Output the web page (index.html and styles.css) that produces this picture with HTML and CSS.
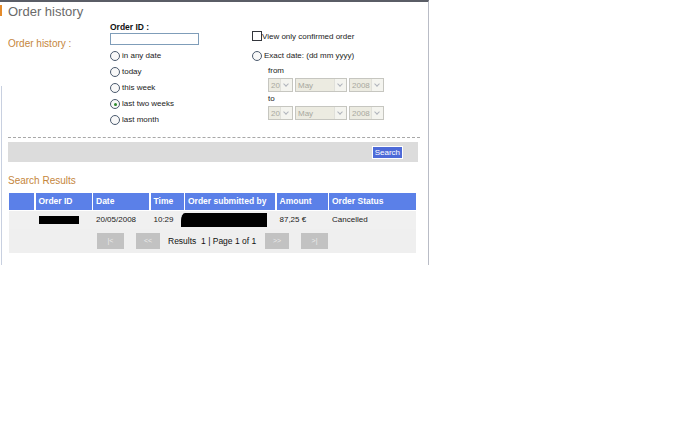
FILE: index.html
```html
<!DOCTYPE html>
<html lang="en">
<head>
  <meta charset="UTF-8">
  <title>Order history</title>
  <link rel="stylesheet" href="styles.css">
</head>
<body>

  <div class="page">
    <h1 class="title">Order history</h1>

    <div class="filters">
      <div class="label">Order history :</div>

      <div class="col-id">
        <div class="field-name">Order ID :</div>
        <div class="text-input"></div>
        <div class="radio-row"><span class="radio"></span>in any date</div>
        <div class="radio-row"><span class="radio"></span>today</div>
        <div class="radio-row"><span class="radio"></span>this week</div>
        <div class="radio-row"><span class="radio checked"></span>last two weeks</div>
        <div class="radio-row"><span class="radio"></span>last month</div>
      </div>

      <div class="col-date">
        <div class="check-row"><span class="checkbox"></span>View only confirmed order</div>
        <div class="radio-row"><span class="radio"></span>Exact date: (dd mm yyyy)</div>
        <div class="date-block">
          <div class="date-label">from</div>
          <div class="selects">
            <span class="select day">20<i class="arrow"></i></span>
            <span class="select month">May<i class="arrow"></i></span>
            <span class="select year">2008<i class="arrow"></i></span>
          </div>
          <div class="date-label">to</div>
          <div class="selects">
            <span class="select day">20<i class="arrow"></i></span>
            <span class="select month">May<i class="arrow"></i></span>
            <span class="select year">2008<i class="arrow"></i></span>
          </div>
        </div>
      </div>
    </div>

    <div class="divider"></div>

    <div class="search-bar">
      <span class="search-btn">Search</span>
    </div>

    <h2 class="results-title">Search Results</h2>

    <div class="results">
      <div class="grid head">
        <div></div>
        <div>Order ID</div>
        <div>Date</div>
        <div>Time</div>
        <div>Order submitted by</div>
        <div>Amount</div>
        <div>Order Status</div>
      </div>
      <div class="grid row">
        <div></div>
        <div><span class="hidden-id"></span></div>
        <div>20/05/2008</div>
        <div>10:29</div>
        <div><span class="hidden-name"></span></div>
        <div>87,25 &euro;</div>
        <div>Cancelled</div>
      </div>
      <div class="pager">
        <span class="pg-btn">|&lt;</span>
        <span class="pg-btn">&lt;&lt;</span>
        <span class="pg-info">Results&nbsp; 1 | Page 1 of 1</span>
        <span class="pg-btn">&gt;&gt;</span>
        <span class="pg-btn">&gt;|</span>
      </div>
    </div>
  </div>

</body>
</html>
```

FILE: styles.css
```css
body {
  margin: 0;
  background-color: white;
  font-family: "Liberation Sans", Arial, sans-serif;
  font-size: 8px;
  color: #222;
}

.page {
  position: relative;
  width: 420px;
  height: 263px;
  padding-left: 8px;
  border-top: 2px solid #5a5d66;
  border-right: 1px solid #b9bcc6;
}

.page::before {
  content: "";
  position: absolute;
  left: 0;
  top: 3px;
  width: 2px;
  height: 11px;
  background-color: #e48a2a;
}

.page::after {
  content: "";
  position: absolute;
  left: 1px;
  top: 84px;
  width: 1px;
  height: 180px;
  background-color: #c8d0e0;
}

.title {
  margin: 0;
  padding-top: 3px;
  font-size: 13px;
  font-weight: normal;
  line-height: 14px;
  color: #6a6a6a;
}

.filters {
  display: flex;
}

.label {
  width: 102px;
  padding-top: 19px;
  font-size: 10px;
  line-height: 12px;
  color: #c5863c;
}

.col-id {
  width: 142px;
}

.field-name {
  font-weight: bold;
  font-size: 8.5px;
  line-height: 12px;
  padding-top: 2px;
  color: #111;
}

.text-input {
  width: 87px;
  height: 10px;
  border: 1px solid #7f9db9;
  margin-bottom: 3px;
  background-color: white;
}

.radio-row {
  display: flex;
  align-items: center;
  height: 16px;
  line-height: 16px;
  color: #222;
}

.radio {
  width: 8px;
  height: 8px;
  border: 1px solid #4b5a6e;
  border-radius: 50%;
  margin-right: 2px;
  background-color: #f8f8f8;
  display: inline-flex;
  align-items: center;
  justify-content: center;
}

.radio.checked::after {
  content: "";
  width: 3px;
  height: 3px;
  border-radius: 50%;
  background-color: #2c8a2c;
}

.col-date {
  padding-top: 11px;
}

.check-row {
  display: flex;
  align-items: center;
  height: 12px;
  margin-bottom: 6px;
}

.checkbox {
  width: 8px;
  height: 8px;
  border: 1px solid #33363c;
  background-color: white;
}

.date-block {
  padding-left: 16px;
}

.date-label {
  height: 14px;
  line-height: 14px;
}

.selects {
  display: flex;
  gap: 2px;
}

.select {
  display: flex;
  align-items: center;
  justify-content: space-between;
  height: 14px;
  padding-left: 2px;
  border: 1px solid #c6c6c0;
  background-color: #ecebe1;
  color: #a8a8a0;
  overflow: hidden;
  box-sizing: border-box;
}

.select.day { width: 25px; }
.select.month { width: 52px; }
.select.year { width: 35px; }

.arrow {
  width: 11px;
  height: 12px;
  background-color: #f4f4ef;
  border-left: 1px solid #e0e0da;
  position: relative;
  flex-shrink: 0;
}

.arrow::after {
  content: "";
  position: absolute;
  left: 3px;
  top: 3px;
  width: 3px;
  height: 3px;
  border-right: 1px solid #b0b4bc;
  border-bottom: 1px solid #b0b4bc;
  transform: rotate(45deg);
}

.divider {
  margin-top: 9px;
  width: 412px;
  border-top: 1px dashed #a8a8a8;
}

.search-bar {
  margin-top: 4px;
  width: 410px;
  height: 20px;
  background-color: #dcdcdc;
  display: flex;
  align-items: center;
  justify-content: flex-end;
}

.search-btn {
  margin-right: 15px;
  padding: 0 2px;
  height: 11px;
  line-height: 11px;
  border: 1px solid white;
  background-color: #4d6ad8;
  color: white;
}

.results-title {
  margin: 0;
  padding-top: 12px;
  font-size: 10px;
  font-weight: normal;
  line-height: 13px;
  color: #c5863c;
}

.results {
  margin-top: 6px;
  margin-left: 1px;
  width: 407px;
}

.grid {
  display: grid;
  grid-template-columns: 25px 56px 56px 33px 90px 51px 1fr;
  column-gap: 1.5px;
}

.head {
  height: 17px;
  line-height: 17px;
  font-weight: bold;
  font-size: 8.5px;
  color: white;
}

.head div {
  background-color: #5b80e8;
  padding-left: 3px;
  white-space: nowrap;
}

.row {
  height: 18px;
  line-height: 18px;
  background-color: #f0f0f0;
  margin-top: 1px;
}

.row div {
  padding-left: 3px;
  display: flex;
  align-items: center;
}

.hidden-id {
  width: 40px;
  height: 8px;
  background-color: black;
}

.hidden-name {
  width: 86px;
  height: 14px;
  margin-left: -7px;
  background-color: black;
  border-top-left-radius: 4px 8px;
}

.pager {
  height: 24px;
  background-color: #efefef;
  display: flex;
  align-items: center;
  padding-left: 88px;
  font-size: 8.5px;
}

.pg-btn {
  width: 27px;
  height: 16px;
  line-height: 16px;
  margin-right: 12px;
  background-color: #c2c2c2;
  color: #ececec;
  text-align: center;
  font-size: 7px;
}

.pg-btn:nth-child(2) {
  width: 24px;
  margin-right: 8px;
}

.pg-btn:nth-child(4) {
  width: 24px;
}

.pg-info {
  width: 97px;
  color: #111;
}
```
